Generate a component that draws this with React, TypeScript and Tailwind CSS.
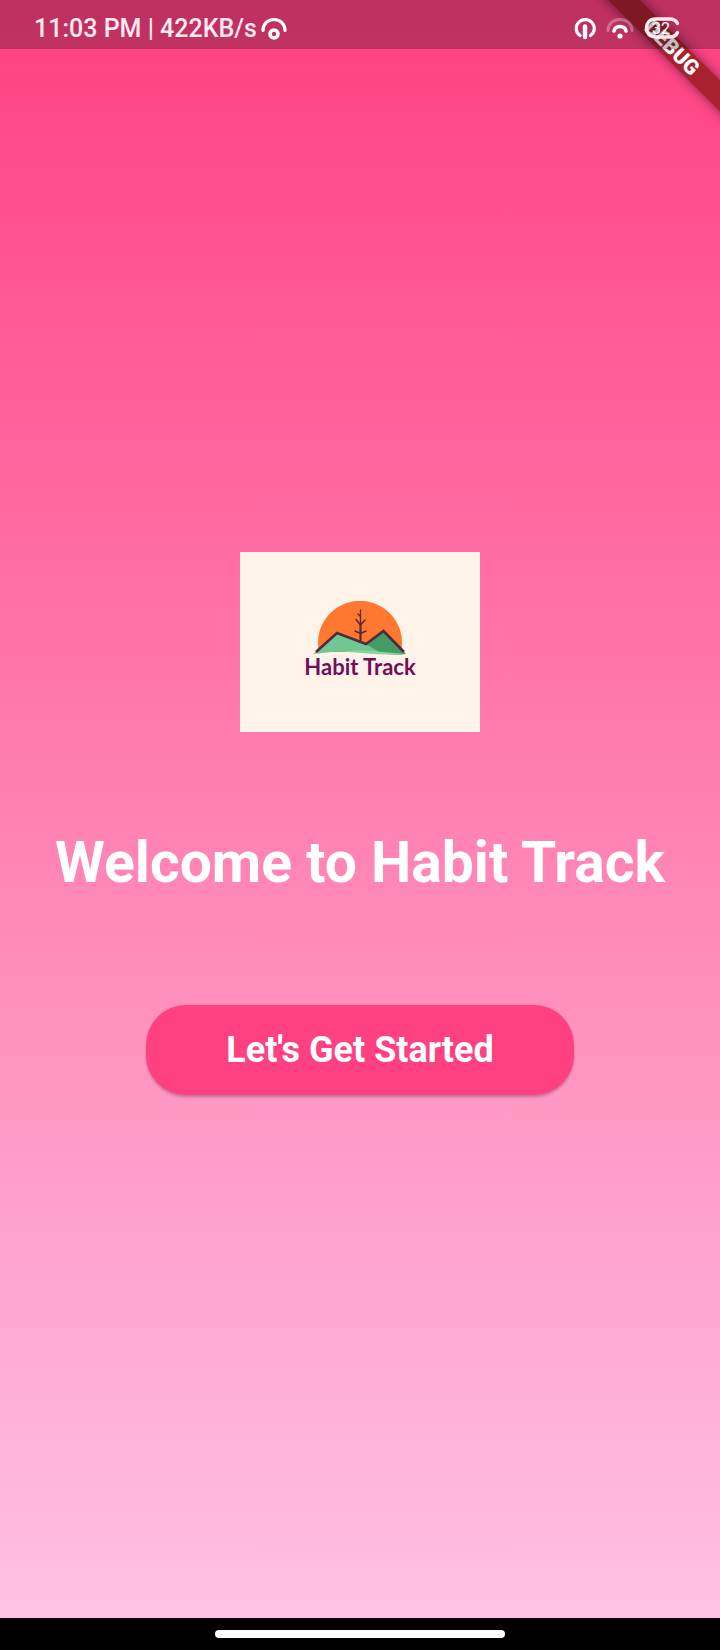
function StatusBar() {
  return (
    <header className="relative z-10 flex h-[49px] items-center justify-between bg-black/25 pt-2 pr-10 pl-[34px] text-[#ffe9f1]">
      <div className="flex items-center gap-[3px]">
        <span className="text-[25px] leading-8 font-medium whitespace-nowrap">11:03 PM | 422KB/s</span>
        <svg width="28" height="24" viewBox="0 0 28 24" fill="none" stroke="#ffffff" aria-hidden="true">
          <path d="M3 13.5C3 7 7.500 2.500 14 2.500S25 7 25 13.500" strokeWidth="3.200" strokeLinecap="round" />
          <circle cx="14" cy="17" r="4" strokeWidth="3.600" />
        </svg>
      </div>
      <div className="flex items-center gap-2.5">
        <svg width="22" height="24" viewBox="0 0 22 24" fill="none" stroke="#ffffff" strokeLinecap="round" aria-hidden="true">
          <path d="M6 18.500A9 8.800 0 1 1 16.500 18.500" strokeWidth="3.200" />
          <path d="M11 9.500V20" strokeWidth="4.400" />
        </svg>
        <svg width="28" height="24" viewBox="0 0 28 24" fill="none" strokeLinecap="round" aria-hidden="true">
          <path d="M2 13.500C2 7 7 2.500 14 2.500S26 7 26 13.500" stroke="#ffffff" strokeOpacity="0.300" strokeWidth="3" />
          <path d="M8 14C9 8 19 8 20 14" stroke="#ffffff" strokeWidth="3.600" />
          <circle cx="14" cy="19" r="2.600" fill="#ffffff" />
        </svg>
        <div className="relative grid h-6 w-9 place-items-center">
          <svg className="absolute inset-0" width="36" height="24" viewBox="0 0 36 24" fill="none" aria-hidden="true">
            <path
              d="M33.500 6.500C32 3 29.500 2 25.500 2H12C5.500 2 2.500 6 2.500 11s3 9 9.500 9h13.500c4 0 6.500-1 8-4.500"
              stroke="#ffe9f1"
              strokeWidth="3.400"
              strokeLinecap="round"
            />
          </svg>
          <span className="relative pr-0.5 pb-0.5 text-base leading-6 text-white">32</span>
        </div>
      </div>
    </header>
  );
}

function DebugBanner() {
  return (
    <div className="absolute top-0 right-0 h-40 w-40 overflow-hidden" aria-hidden="true">
      <div className="absolute top-[37px] -right-[52px] flex h-[22px] w-[200px] rotate-45 items-center justify-center bg-[#a9202f] text-[21px] leading-none font-black text-white shadow-[0_0_12px_rgba(0,0,0,0.5)]">
        DEBUG
      </div>
    </div>
  );
}

function Logo() {
  return (
    <div className="flex h-[180px] w-60 flex-col items-center bg-[#fff2e8] pt-[49px]">
      <svg width="94" height="54" viewBox="0 0 94 54" aria-hidden="true">
        <path d="M6 51A42 42 0 1 1 88 51Z" fill="#ff7830" />
        <path d="M0 53L24 32L54 43L72 52C45 49 20 50 0 53Z" fill="#6fc793" />
        <path d="M53 43L70.500 29.500L93 53C86 54 76 54 68 52Z" fill="#439c66" />
        <path d="M30 50.500C52 48 64 51 93 53C76 55 50 52 30 50.500Z" fill="#8bd3a6" />
        <path d="M3 51L24 32L53 43L70.500 30L91 51" fill="none" stroke="#4f2b3c" strokeWidth="2.600" />
        <g fill="none" stroke="#5a2a35" strokeLinecap="round">
          <path d="M47.500 9V24" strokeWidth="1.300" />
          <path d="M47.500 22V41" strokeWidth="2.200" />
          <path
            d="M47 15L45 13M47.500 24L43 18.500M47.500 24L52 19M47.500 32.500L42 30M47.500 32.500L53 30"
            strokeWidth="1.500"
          />
        </g>
      </svg>
      <span className="font-[Lato,sans-serif] text-[22px] leading-6 font-bold whitespace-nowrap text-[#720f5c]">
        Habit Track
      </span>
    </div>
  );
}

export default function App() {
  return (
    <div className="flex min-h-screen flex-col bg-black font-[Roboto,sans-serif]">
      <div className="relative flex flex-1 flex-col bg-linear-to-b/srgb from-[#ff4081] to-[#ffc1e3]">
        <DebugBanner />
        <StatusBar />
        <main className="flex flex-1 flex-col items-center justify-center pb-5">
          <Logo />
          <h1 className="mt-[98px] text-center text-[57px] leading-[66px] font-bold text-white">Welcome to Habit Track</h1>
          <button
            type="button"
            className="mt-[109px] h-[90px] rounded-[40px] bg-[#ff4081] px-20 text-4xl font-bold text-white shadow-[0_2px_3px_rgba(0,0,0,0.25)]"
          >
            Let&apos;s Get Started
          </button>
        </main>
      </div>
      <footer className="flex h-8 items-center justify-center">
        <div className="h-2 w-[290px] rounded-full bg-white" />
      </footer>
    </div>
  );
}
